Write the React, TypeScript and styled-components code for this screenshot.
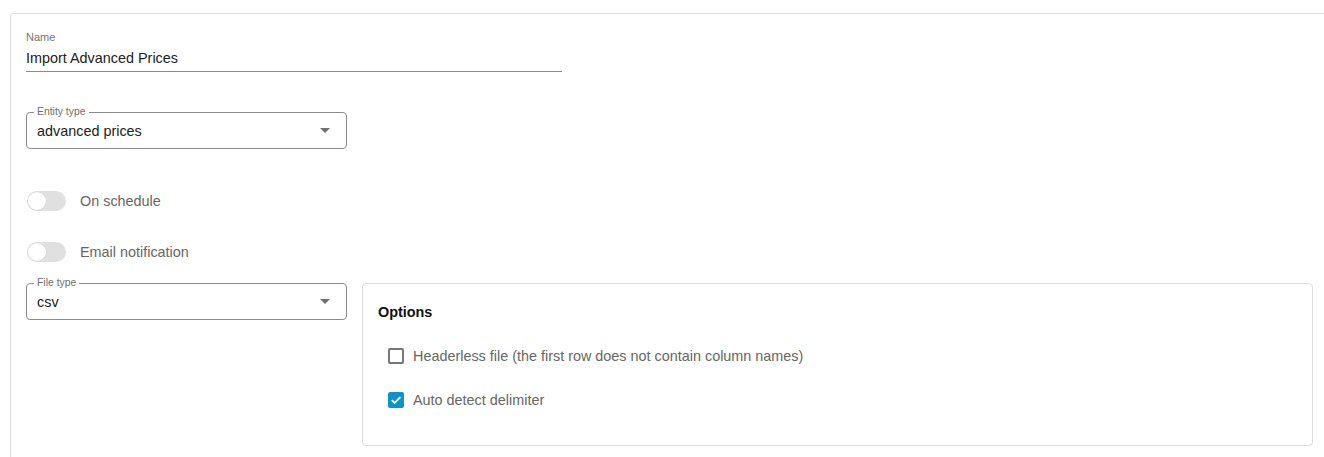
import React, { useState } from "react";
import styled, { createGlobalStyle } from "styled-components";

const GlobalStyle = createGlobalStyle`
  html, body {
    margin: 0;
    padding: 0;
    background: #ffffff;
    overflow: hidden;
  }
  body {
    font-family: "Liberation Sans", Arial, sans-serif;
    color: #212121;
  }
`;

const Page = styled.div`
  padding: 13px 0 0 10px;
  height: 457px;
  box-sizing: border-box;
  overflow: hidden;
`;

const Card = styled.div`
  border: 1px solid #e0e0e0;
  border-right: none;
  border-bottom: none;
  border-top-left-radius: 4px;
  height: calc(100% + 8px);
  padding: 16px 0 0 15px;
  box-sizing: border-box;
`;

const TextField = styled.div`
  width: 536px;
  display: flex;
  flex-direction: column;
`;

const SmallLabel = styled.label`
  font-size: 11px;
  line-height: 15px;
  color: #757575;
`;

const TextInput = styled.input`
  border: none;
  border-bottom: 1px solid #8c8c8c;
  outline: none;
  padding: 0;
  height: 26px;
  font-family: inherit;
  font-size: 14.4px;
  color: #212121;
  background: transparent;
`;

const Outlined = styled.div<{ $top: number }>`
  position: relative;
  margin-top: ${(p) => p.$top}px;
  width: 321px;
  height: 37px;
  box-sizing: border-box;
  border: 1px solid #8c8c8c;
  border-radius: 4px;
  display: flex;
  align-items: center;
  justify-content: space-between;
  padding: 0 16px 0 10px;
  font-size: 14.4px;
  color: #212121;
  cursor: pointer;
`;

const Legend = styled.span`
  position: absolute;
  top: -7px;
  left: 7px;
  padding: 0 3px;
  background: #ffffff;
  font-size: 10.4px;
  line-height: 12px;
  color: #6e6e6e;
`;

const Caret = styled.span`
  width: 0;
  height: 0;
  border-left: 5px solid transparent;
  border-right: 5px solid transparent;
  border-top: 5px solid #707070;
`;

const ToggleRow = styled.div<{ $top: number }>`
  margin-top: ${(p) => p.$top}px;
  display: flex;
  align-items: center;
  gap: 14px;
  height: 20px;
  margin-left: 1px;
`;

const Track = styled.button<{ $on: boolean }>`
  position: relative;
  width: 39px;
  height: 20px;
  border: none;
  padding: 0;
  border-radius: 10px;
  background: ${(p) => (p.$on ? "#8fcbe6" : "#e0e0e0")};
  cursor: pointer;
`;

const Thumb = styled.span<{ $on: boolean }>`
  position: absolute;
  top: 1px;
  left: ${(p) => (p.$on ? "20px" : "1px")};
  width: 18px;
  height: 18px;
  border-radius: 50%;
  background: #ffffff;
  box-shadow: 0 0 0 0.5px #d0d0d0;
`;

const MutedText = styled.span`
  font-size: 14.4px;
  color: #666666;
`;

const Row = styled.div`
  display: flex;
  align-items: flex-start;
  gap: 15px;
  margin-top: 21px;
`;

const Options = styled.div`
  width: 951px;
  height: 163px;
  box-sizing: border-box;
  border: 1px solid #dddddd;
  border-radius: 4px;
  padding: 19px 15px 0 15px;
`;

const OptionsTitle = styled.div`
  font-size: 14.4px;
  line-height: 18px;
  font-weight: 700;
  color: #111111;
  margin-bottom: 23px;
`;

const CheckRow = styled.label`
  display: flex;
  align-items: center;
  gap: 9px;
  height: 24px;
  margin: 0 0 20px 10px;
  cursor: pointer;
`;

const Box = styled.span<{ $checked: boolean }>`
  width: 16px;
  height: 16px;
  box-sizing: border-box;
  border-radius: 2px;
  border: 2px solid ${(p) => (p.$checked ? "#0d93c9" : "#777777")};
  background: ${(p) => (p.$checked ? "#0d93c9" : "#ffffff")};
  display: flex;
  align-items: center;
  justify-content: center;
`;

const Toggle = ({ label, top }: { label: string; top: number }) => {
  const [on, setOn] = useState(false);
  return (
    <ToggleRow $top={top}>
      <Track $on={on} onClick={() => setOn(!on)} aria-label={label}>
        <Thumb $on={on} />
      </Track>
      <MutedText>{label}</MutedText>
    </ToggleRow>
  );
};

const Check = ({ label, initial }: { label: string; initial: boolean }) => {
  const [checked, setChecked] = useState(initial);
  return (
    <CheckRow onClick={() => setChecked(!checked)}>
      <Box $checked={checked}>
        {checked && (
          <svg width="12" height="12" viewBox="0 0 12 12">
            <path d="M1.8 6.2 L4.6 9 L10.4 3.2" fill="none" stroke="#ffffff" strokeWidth="1.8" />
          </svg>
        )}
      </Box>
      <MutedText>{label}</MutedText>
    </CheckRow>
  );
};

const App = () => {
  const [name, setName] = useState("Import Advanced Prices");

  return (
    <Page>
      <GlobalStyle />
      <Card>
        <TextField>
          <SmallLabel>Name</SmallLabel>
          <TextInput value={name} onChange={(e) => setName(e.target.value)} />
        </TextField>

        <Outlined $top={40}>
          <Legend>Entity type</Legend>
          advanced prices
          <Caret />
        </Outlined>

        <Toggle label="On schedule" top={42} />
        <Toggle label="Email notification" top={31} />

        <Row>
          <Outlined $top={0}>
            <Legend>File type</Legend>
            csv
            <Caret />
          </Outlined>
          <Options>
            <OptionsTitle>Options</OptionsTitle>
            <Check label="Headerless file (the first row does not contain column names)" initial={false} />
            <Check label="Auto detect delimiter" initial={true} />
          </Options>
        </Row>
      </Card>
    </Page>
  );
};

export default App;
